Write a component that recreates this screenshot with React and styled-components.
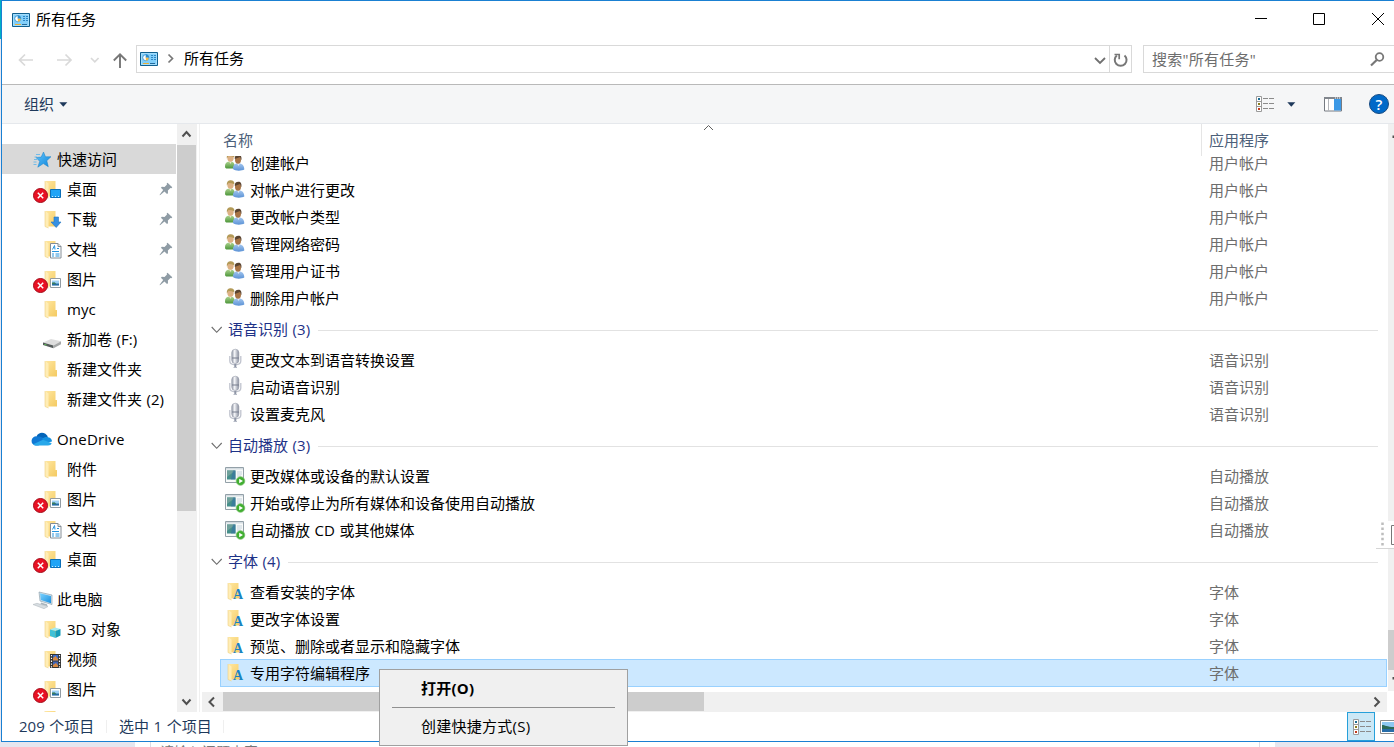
import React from "react";
import styled, { createGlobalStyle, css } from "styled-components";

const quickAccess = [
  { name: "桌面", icon: "desktop", error: true, pinned: true },
  { name: "下载", icon: "download", pinned: true },
  { name: "文档", icon: "document", pinned: true },
  { name: "图片", icon: "picture", error: true, pinned: true },
  { name: "myc", icon: "folder" },
  { name: "新加卷 (F:)", icon: "drive" },
  { name: "新建文件夹", icon: "folder" },
  { name: "新建文件夹 (2)", icon: "folder" },
];

const oneDrive = [
  { name: "附件", icon: "folder" },
  { name: "图片", icon: "picture", error: true },
  { name: "文档", icon: "document" },
  { name: "桌面", icon: "desktop", error: true },
];

const thisPc = [
  { name: "3D 对象", icon: "cube" },
  { name: "视频", icon: "video" },
  { name: "图片", icon: "picture", error: true },
  // only the top of this row's icon shows above the status bar
  { name: "", icon: "folder" },
];

const groups = [
  {
    app: "用户帐户",
    icon: "users",
    hideTitle: true,
    tasks: [
      "创建帐户",
      "对帐户进行更改",
      "更改帐户类型",
      "管理网络密码",
      "管理用户证书",
      "删除用户帐户",
    ],
  },
  {
    app: "语音识别",
    icon: "mic",
    tasks: ["更改文本到语音转换设置", "启动语音识别", "设置麦克风"],
  },
  {
    app: "自动播放",
    icon: "autoplay",
    tasks: [
      "更改媒体或设备的默认设置",
      "开始或停止为所有媒体和设备使用自动播放",
      "自动播放 CD 或其他媒体",
    ],
  },
  {
    app: "字体",
    icon: "font",
    tasks: [
      "查看安装的字体",
      "更改字体设置",
      "预览、删除或者显示和隐藏字体",
      "专用字符编辑程序",
    ],
  },
];

export default function App() {
  return (
    <>
      <GlobalStyle />
      <Gradients />
      <Screen>
        <WindowRow>
          <DesktopEdge />
          <Window>
            <TitleBar />
            <NavigationBar />
            <CommandBar />
            <Body>
              <Sidebar />
              <Content />
            </Body>
            <Status />
          </Window>
        </WindowRow>
        <PageBehind>
          <BehindLeft />
          <BehindEditor>
            <span>请输入问题内容</span>
          </BehindEditor>
          <BehindGap />
          <BehindRight />
        </PageBehind>
        <DockedToolbar />
        <ContextMenu>
          <MenuItem $bold>打开(O)</MenuItem>
          <MenuSeparator />
          <MenuItem>创建快捷方式(S)</MenuItem>
        </ContextMenu>
      </Screen>
    </>
  );
}

function TitleBar() {
  return (
    <Title>
      <PanelIcon />
      <TitleText>所有任务</TitleText>
      <WindowButtons width="139" height="38" viewBox="0 0 139 38">
        <path d="M0 18.500h12" />
        <path d="M58.500 13.500h11v11h-11z" />
        <path d="M117 13l12 12M129 13l-12 12" />
      </WindowButtons>
    </Title>
  );
}

function NavigationBar() {
  return (
    <Nav>
      <svg width="134" height="45" viewBox="2 39 134 45" fill="none">
        <g stroke="#d9d9d9" strokeWidth="1.7">
          <path d="M33 60H19M25 54.500L19.500 60l5.500 5.500" />
          <path d="M57 60h14M65.500 54.500L71 60l-5.500 5.500" />
          <path d="M91 58l3.800 3.800L98.600 58" />
        </g>
        <path
          d="M120 68V54.500M113.800 60.500l6.200-6.200 6.200 6.200"
          stroke="#777"
          strokeWidth="1.900"
        />
      </svg>
      <AddressBox>
        <PanelIcon />
        <svg width="26" height="26" viewBox="0 0 26 26" fill="none">
          <path d="M10.500 8.500l4 4-4 4" stroke="#777" strokeWidth="1.700" />
        </svg>
        <AddressText>所有任务</AddressText>
        <svg width="18" height="26" viewBox="0 0 18 26" fill="none">
          <path d="M4 12l5 5 5-5" stroke="#707070" strokeWidth="1.800" />
        </svg>
        <RefreshCell>
          <svg width="21" height="26" viewBox="0 0 21 26" fill="none">
            <path
              d="M14.500 9.400A5.900 5.900 0 1 1 6.800 9.400"
              stroke="#777"
              strokeWidth="2"
            />
            <path d="M4.500 8.500h4.700v4.700" stroke="#777" strokeWidth="1.700" />
          </svg>
        </RefreshCell>
      </AddressBox>
      <SearchBox>
        搜索"所有任务"
        <svg width="25" height="26" viewBox="0 0 25 26" fill="none">
          <circle cx="10.500" cy="11" r="3.800" stroke="#777" strokeWidth="1.800" />
          <path d="M7.700 14L2 19.500" stroke="#777" strokeWidth="2.200" />
        </svg>
      </SearchBox>
    </Nav>
  );
}

function CommandBar() {
  return (
    <Commands>
      <OrganizeButton>
        组织
        <Caret />
      </OrganizeButton>
      <CommandIcons>
        <DetailsIcon />
        <Caret />
        <svg width="18" height="15" viewBox="0 0 18 15">
          <path d="M.5.500h17v13.500H.5z" fill="#fff" stroke="#767b82" />
          <path d="M0 0h18v2H0z" fill="#81868d" />
          <path d="M11 1h1M13 1h1M15 1h1" stroke="#fff" />
          <path d="M4.500 2v12" stroke="#b3b6ba" />
          <path d="M10 2h7v11.500h-7z" fill="#3c99e6" />
        </svg>
        <svg width="20" height="20" viewBox="0 0 20 20">
          <circle cx="10" cy="10" r="9.500" fill="#0069c8" stroke="#174b82" />
          <HelpMark x="10" y="15.500">
            ?
          </HelpMark>
        </svg>
      </CommandIcons>
    </Commands>
  );
}

function Sidebar() {
  return (
    <SidebarArea>
      <Tree>
        <TreeSection title="快速访问" icon="star" items={quickAccess} active />
        <TreeSection title="OneDrive" icon="cloud" items={oneDrive} />
        <TreeSection title="此电脑" icon="computer" items={thisPc} />
      </Tree>
      <VerticalScroll>
        <ArrowButton direction="up" />
        <VerticalThumb />
        <Spacer />
        <ArrowButton direction="down" />
      </VerticalScroll>
    </SidebarArea>
  );
}

function TreeSection({ title, icon, items, active }) {
  return (
    <Section>
      <RootRow $active={active}>
        <RootIcon name={icon} />
        {title}
      </RootRow>
      {items.map((item) => (
        <TreeRow key={item.name}>
          <PlaceIcon name={item.icon} error={item.error} />
          <TreeLabel>{item.name}</TreeLabel>
          {item.pinned && <Pin />}
        </TreeRow>
      ))}
    </Section>
  );
}

function Content() {
  return (
    <>
      <Main>
        <ColumnHeader>
          <NameHeader>名称</NameHeader>
          <SortMark width="12" height="7" viewBox="0 0 12 7">
            <path d="M2 6l4.500-4.500L11 6" />
          </SortMark>
          <AppHeader>应用程序</AppHeader>
        </ColumnHeader>
        <ListViewport>
          <List>
            {groups.map((group) => (
              <React.Fragment key={group.app}>
                {!group.hideTitle && (
                  <GroupTitle>
                    <svg width="12" height="8" viewBox="0 0 12 8" fill="none">
                      <path d="M.7 1l5 5.300 5-5.300" stroke="#6d6d6d" strokeWidth="1.100" />
                    </svg>
                    <GroupLabel>
                      {group.app} ({group.tasks.length})
                    </GroupLabel>
                    <GroupLine />
                  </GroupTitle>
                )}
                {group.tasks.map((task) => (
                  <TaskRow key={task} $selected={task === "专用字符编辑程序"}>
                    <TaskIcon name={group.icon} />
                    <TaskName>{task}</TaskName>
                    <TaskApp>{group.app}</TaskApp>
                  </TaskRow>
                ))}
              </React.Fragment>
            ))}
          </List>
        </ListViewport>
        <HorizontalScroll>
          <ArrowButton direction="left" />
          <HorizontalThumb />
          <Spacer />
          <ArrowButton direction="right" />
        </HorizontalScroll>
      </Main>
      <OuterScroll>
        <svg width="6" height="20" viewBox="0 0 6 20">
          <path d="M6 11.500H4.500V14H6z" fill="#505050" />
        </svg>
        <Spacer />
        <OuterThumb />
        <svg width="6" height="21" viewBox="0 0 6 21">
          <path d="M6 7H4.500v2.500H6z" fill="#505050" />
        </svg>
      </OuterScroll>
    </>
  );
}

function Status() {
  return (
    <StatusBar>
      <StatusText $width={105}>209 个项目</StatusText>
      <StatusText $width={117}>选中 1 个项目</StatusText>
      <Spacer />
      <ViewButton>
        <DetailsIcon />
      </ViewButton>
      <svg width="19" height="28" viewBox="0 0 19 28">
        <path d="M5.500 7.500h18v13h-18z" fill="#fff" stroke="#8b8b8b" />
        <path d="M7 9h14v10H7z" fill="#8ec8f2" />
        <path d="M7 12c3 0 5 2 12 2v2H7z" fill="#2b6a58" />
        <path d="M7 16h14v3H7z" fill="#276ca8" />
      </svg>
    </StatusBar>
  );
}

function DockedToolbar() {
  return (
    <Docked width="18" height="28" viewBox="0 0 18 28">
      <path d="M0 0h18v28H0z" fill="#fff" />
      <path d="M6.500 1.500v26" stroke="#bdbdbd" strokeWidth="2.500" strokeDasharray="2.500 2.600" />
      <path d="M0 27.500h18" stroke="#d5d5d5" />
      <path d="M20 4.500h-4.500v19H20" fill="none" stroke="#777" />
    </Docked>
  );
}

/* ---------- icons ---------- */

function Gradients() {
  return (
    <HiddenSvg width="0" height="0">
      <defs>
        <linearGradient id="folder" x1="0" x2="1" y2="1">
          <stop offset="0" stopColor="#ffe7a0" />
          <stop offset="1" stopColor="#f4ca61" />
        </linearGradient>
        <linearGradient id="star" x1="0" x2="1" y2="1">
          <stop offset="0" stopColor="#63c3fa" />
          <stop offset="1" stopColor="#0e86dc" />
        </linearGradient>
        <linearGradient id="screen" x1="0" x2="1" y2="1">
          <stop offset="0" stopColor="#7cd3ff" />
          <stop offset="1" stopColor="#1b8fde" />
        </linearGradient>
        <linearGradient id="mic" x1="0" x2="1">
          <stop offset="0" stopColor="#8f95a4" />
          <stop offset=".4" stopColor="#f4f5f8" />
          <stop offset="1" stopColor="#858b9b" />
        </linearGradient>
        <linearGradient id="green" x2="0" y2="1">
          <stop offset="0" stopColor="#b3d795" />
          <stop offset="1" stopColor="#4c963a" />
        </linearGradient>
        <linearGradient id="blue" x2="0" y2="1">
          <stop offset="0" stopColor="#a5c7ef" />
          <stop offset="1" stopColor="#5c93d6" />
        </linearGradient>
      </defs>
    </HiddenSvg>
  );
}

function PanelIcon() {
  return (
    <svg width="18" height="14" viewBox="0 0 18 14">
      <path d="M.5.500h17v13H.5z" fill="#82cffa" stroke="#11608f" />
      <path d="M1.500 1.500h15v11h-15z" fill="none" stroke="#a5ddfb" />
      <circle cx="5.700" cy="5.700" r="3" fill="#fff" stroke="#2c8ccb" strokeWidth=".8" />
      <path d="M5.700 5.700V2.300A3.400 3.400 0 0 1 9 5.700z" fill="#2c8ccb" />
      <path d="M5.700 5.700h3A3 3 0 0 1 6 8.700z" fill="#f5b942" />
      <path d="M11 3.500h2M11 5.500h2M11 7.500h2M14 3.500h2M14 5.500h2M14 7.500h2" stroke="#2f86c4" />
      <path d="M3 11.500h6" stroke="#e9ae36" />
      <path d="M10 11.500h5" stroke="#236c9d" />
    </svg>
  );
}

function Caret() {
  return (
    <svg width="9" height="5" viewBox="0 0 9 5">
      <path d="M.3.200h8L4.300 4.700z" fill="#1e395b" />
    </svg>
  );
}

function DetailsIcon() {
  return (
    <svg width="18" height="16" viewBox="0 0 18 16" fill="none">
      <path d="M.5.500h5v15h-5zM.5 5.500h5M.5 10.500h5" fill="#fff" stroke="#9a9a9a" />
      <path d="M2 3h2" stroke="#1b6d94" strokeWidth="2" />
      <path d="M2 8h2" stroke="#8a7d1b" strokeWidth="2" />
      <path d="M2 13h2" stroke="#c3391b" strokeWidth="2" />
      <path
        d="M7 2.500h5M13 2.500h5M7 7.500h5M13 7.500h5M7 12.500h5M13 12.500h5"
        stroke="#8b8b8b"
      />
    </svg>
  );
}

function Pin() {
  return (
    <svg width="14" height="14" viewBox="0 0 14 14" fill="#8f9ca5">
      <path d="M8.500.7l4.800 4.600-.9.900-1-.2-2.500 2.600.1 2.600-1 .9-2.500-2.500L1.300 13l-.7.200.2-.8 3.400-4.300L1.900 5.700l1-1 2.600.2L8 2.500l-.3-1z" />
    </svg>
  );
}

function RootIcon({ name }) {
  return (
    <svg width="22" height="30" viewBox="31 0 22 30">
      {name === "star" && (
        <>
          <path
            d="M43.500 8l2 4.800 5.500-.1-4.200 4 1.500 6-5-3.100-5.500 3.600 1.900-5.900-3.700-3.800 5.200-.4z"
            fill="url(#star)"
            stroke="#1580c8"
            strokeWidth=".5"
          />
          <path
            d="M36 10.500h4M34.500 13h2.500M34 15.500h3M33.500 18h3M33.500 20.500h3"
            stroke="#58b5ee"
            strokeWidth=".8"
          />
        </>
      )}
      {name === "cloud" && (
        <>
          <path d="M36.500 12.500c2-4.800 9-5.200 11.500.7l-3 5z" fill="#0364b8" />
          <path d="M36.800 21.500a4.600 4.600 0 1 1 .5-9c2-.4 4 .2 6 1.500l4 4-9 3.500z" fill="#0f78d4" />
          <path d="M42 15c1.800-1.800 4-2.300 6-1.800 2.700.5 4 2.300 4 4.300L46 19z" fill="#1490df" />
          <path d="M33.200 20.200L43 15.700l8.700 3.600c-.6 1.700-1.900 2.200-3.700 2.200H36.500c-1.400 0-2.600-.5-3.300-1.300z" fill="#28a8ea" />
        </>
      )}
      {name === "computer" && (
        <>
          <path d="M39 8l13 3v9.500L40 17z" fill="#d5e3ec" stroke="#8297a5" strokeWidth=".6" />
          <path d="M40 9.200l11 2.700v7.400L40.800 16z" fill="url(#screen)" />
          <path d="M41 18.500l6 1.700.5 2-7-2z" fill="#a9b5bd" />
          <path d="M33 20.500l4-1.200 11 3.200-4 2.200z" fill="#d7dde1" stroke="#aab3b9" strokeWidth=".5" />
        </>
      )}
    </svg>
  );
}

function FolderShape() {
  return (
    <>
      <path d="M12 7h10.500v9h1.500v6.500h-9V10z" fill="url(#folder)" />
      <path d="M12 7l3.500 2.500V24L12 22.500z" fill="#ffedb5" />
      <path d="M12 7v15.500l3.500 1.500" fill="none" stroke="#efce7c" strokeWidth=".6" />
    </>
  );
}

function PlaceIcon({ name, error }) {
  return (
    <svg width="34" height="30" viewBox="0 0 34 30">
      {name !== "drive" && <FolderShape />}
      {name === "desktop" && (
        <>
          <path d="M17.500 15.500h10v8h-10z" fill="#1fa4f7" stroke="#0d70b8" />
          <path d="M19 22.500h1M22 22.500h1M25 22.500h1" stroke="#cbeaff" />
        </>
      )}
      {name === "download" && (
        <path d="M21 13h4.500v5H28l-4.800 5.500L18 18h3z" fill="#3690e3" stroke="#2476bf" strokeWidth=".6" />
      )}
      {name === "document" && (
        <>
          <path d="M17.500 9.500H25l3 3v11.500H17.500z" fill="#fff" stroke="#858e96" />
          <path d="M25 9.500v3h3" fill="#e3e6e8" stroke="#858e96" />
          <path d="M19.500 15.500l2-4 .5 4M24 14.500h2M19 17.500h7M19 20h2M22.500 20h4M19 22h2M22.500 22h4" fill="none" stroke="#2693dc" />
        </>
      )}
      {name === "picture" && (
        <>
          <path d="M17.500 14.500h10v9h-10z" fill="#fff" stroke="#929ba3" />
          <path d="M19 16.500h7v5h-7z" fill="#9ed0f4" />
          <path d="M19 19.500l2-1 2 1h3v2h-7z" fill="#276da0" />
          <path d="M19 18.500h3l1 1.500h-4z" fill="#397d5d" />
        </>
      )}
      {name === "drive" && (
        <>
          <path d="M10 18.500L18 15l10 2.200-7.500 4.300z" fill="#dedede" />
          <path d="M10 18.500l10.500 3v2.800L10 21z" fill="#555b5b" />
          <path d="M20.500 21.500l7.500-4.300v3L20.500 24.300z" fill="#a6a8a8" />
          <path d="M11.500 20.500l2 .5" stroke="#62cf58" />
        </>
      )}
      {name === "cube" && (
        <>
          <path d="M17 15.500l5-2 5.500 1.500-5 2z" fill="#a6eaf2" />
          <path d="M17 15.500l5.500 1.500v7L17 22z" fill="#3fc1d7" />
          <path d="M22.500 17l5-2v6.500l-5 2.500z" fill="#149bb9" />
        </>
      )}
      {name === "video" && (
        <>
          <path d="M17 10h11v14H17z" fill="#343434" />
          <path d="M20 11h5v5.500h-5z" fill="#396bcb" />
          <path d="M20 17.500h5V23h-5z" fill="#4165b6" />
          <path d="M20 14l2.500-2 2.500 3v1.500h-5zM20 21l3-2 2 2.500V23h-5z" fill="#d78942" />
          <path d="M18.500 11v13M26.500 11v13" stroke="#fff" strokeWidth="1.200" strokeDasharray="1.300 1.500" />
        </>
      )}
      {error && (
        <>
          <circle cx="7.500" cy="21.500" r="7" fill="#e81123" stroke="#a40d1b" />
          <path d="M4.800 18.800l5.400 5.400M10.200 18.800l-5.400 5.400" stroke="#fff" strokeWidth="1.500" />
        </>
      )}
    </svg>
  );
}

function TaskIcon({ name }) {
  return (
    <svg width="24" height="27" viewBox="0 0 24 27">
      {name === "users" && (
        <g transform="translate(0 1)">
          <path d="M2 15.500c0-4 2.300-5 5-5.300 3.500.3 5 1.800 5 7.300H4c-1.200 0-2-.5-2-2z" fill="url(#green)" />
          <path d="M5.500 9.500h3.500l-1.500 3.500z" fill="#e8e8cc" />
          <ellipse cx="7.500" cy="6.700" rx="3.200" ry="4" fill="#ddb184" />
          <path d="M3.800 7.500C3.500 4 5 2.200 7.700 2.200c2.500 0 3.800 1.300 3.700 4L8.500 5.200 5.500 5z" fill="#b39a57" />
          <path d="M10 18c-.2-4 2-5.700 5.500-5.700S21.300 14.500 21.300 18.500c-2.300 1.500-9.300 1.700-11.300-.5z" fill="url(#blue)" />
          <path d="M13.500 11.500h4l-2 3.500z" fill="#e1ebf5" />
          <ellipse cx="15" cy="8.700" rx="3" ry="4.100" fill="#a87445" />
          <path d="M11.800 8c-.3-3 1.200-4.200 3.700-4.200 2.300 0 3.500 2 2.800 5.400L17 6z" fill="#594330" />
        </g>
      )}
      {name === "mic" && (
        <>
          <path d="M6.800 9v5c0 5 11 5 11 0V9" fill="none" stroke="#c0c4ce" strokeWidth="1.300" />
          <rect x="8.700" y="2.200" width="7.200" height="14.300" rx="3.600" fill="url(#mic)" stroke="#9a9fac" strokeWidth=".6" />
          <path d="M9 11h7" stroke="#767d8d" />
          <path d="M12.300 16.800V21" stroke="#8f96a6" strokeWidth="2" />
          <path d="M10.500 20.500H14" stroke="#b5bac6" />
        </>
      )}
      {name === "autoplay" && (
        <>
          <path d="M2.500 4.500h18v15h-18z" fill="#f8faf9" stroke="#93a0a8" />
          <path d="M3 5h17v1.500H3z" fill="#d4dce1" />
          <path d="M4 7.500h8.500v9H4z" fill="#458f8a" />
          <path d="M4 7.500h8.500L4 14z" fill="#6fa09a" />
          <path d="M10 7.500h2.500v9H8z" fill="#3472a5" opacity=".6" />
          <path d="M14 9h5M14 11h5M14 13h4" stroke="#c6d3dc" />
          <circle cx="17.500" cy="18" r="4.300" fill="#41ae31" stroke="#78be6c" strokeWidth=".7" />
          <path d="M16.200 15.700v4.600l3.800-2.300z" fill="#fff" />
        </>
      )}
      {name === "font" && (
        <>
          <g transform="translate(-7 -3)">
            <FolderShape />
          </g>
          <FontLetter x="15" y="20">
            A
          </FontLetter>
        </>
      )}
    </svg>
  );
}

const arrowPaths = {
  up: "M5.500 12.500l4-4.500 4 4.500",
  down: "M5.500 7.500l4 4.500 4-4.500",
  left: "M12 5.500L7.500 10l4.500 4.500",
  right: "M7.500 5.500l4.500 4.500-4.500 4.500",
};

function ArrowButton({ direction }) {
  return (
    <ArrowSvg width="20" height="20" viewBox="0 0 20 20">
      <path d={arrowPaths[direction]} />
    </ArrowSvg>
  );
}

/* ---------- styles ---------- */

const GlobalStyle = createGlobalStyle`
  * {
    box-sizing: border-box;
  }

  body {
    margin: 0;
    overflow: hidden;
    background: #fff;
    color: #000;
    font-family: "Open Sans", "Noto Sans CJK SC", sans-serif;
    font-size: 15px;
    line-height: 20px;
    white-space: nowrap;
    word-spacing: 0.7px;
  }

  svg {
    display: block;
    flex: none;
  }
`;

const HiddenSvg = styled.svg`
  position: absolute;
`;

const Screen = styled.div`
  position: relative;
  display: flex;
  flex-direction: column;
  width: 1394px;
  height: 747px;
  overflow: hidden;
`;

const WindowRow = styled.div`
  display: flex;
  height: 742px;
`;

const DesktopEdge = styled.div`
  width: 1px;
  background: linear-gradient(#00b1c4 39px, #e8e8f1 39px);
`;

const Window = styled.div`
  display: flex;
  flex-direction: column;
  width: 1393px;
  border: 1px solid #1a80d2;
  border-right: 0;
  background: #fff;
`;

const Title = styled.header`
  display: flex;
  align-items: center;
  height: 38px;
  padding-left: 10px;
`;

const TitleText = styled.span`
  flex: 1;
  margin-left: 6px;
  padding-bottom: 2px;
`;

const WindowButtons = styled.svg`
  margin-top: -2px;
  fill: none;
  stroke: #000;
  stroke-width: 1;
`;

const Nav = styled.nav`
  display: flex;
  height: 45px;
`;

const AddressBox = styled.div`
  display: flex;
  align-items: center;
  width: 996px;
  height: 28px;
  margin-top: 6px;
  padding-left: 3px;
  border: 1px solid #d9d9d9;
`;

const AddressText = styled.span`
  flex: 1;
  padding-bottom: 2px;
`;

const RefreshCell = styled.div`
  border-left: 1px solid #d9d9d9;
`;

const SearchBox = styled.div`
  display: flex;
  align-items: center;
  justify-content: space-between;
  width: 251px;
  height: 28px;
  margin: 6px 0 0 11px;
  padding-left: 8px;
  border: 1px solid #d9d9d9;
  border-right: 0;
  color: #6d6d6d;
  letter-spacing: 0.25px;
`;

const Commands = styled.div`
  display: flex;
  align-items: center;
  justify-content: space-between;
  height: 40px;
  padding-left: 22px;
  border-top: 1px solid #b9b9b9;
  border-bottom: 1px solid #e5e8ec;
  background: #f5f6f7;
  color: #1e395b;
`;

const OrganizeButton = styled.div`
  display: flex;
  align-items: center;
  gap: 5px;
`;

const CommandIcons = styled.div`
  display: grid;
  grid-template-columns: 31px 37px 45px 25px;
  align-items: center;
`;

const HelpMark = styled.text`
  fill: #fff;
  font: 600 15px "Open Sans", sans-serif;
  text-anchor: middle;
`;

const FontLetter = styled.text`
  fill: #1984bf;
  font: bold 14px "Liberation Serif", serif;
  text-anchor: middle;
`;

const Body = styled.div`
  display: flex;
  height: 588px;
`;

const SidebarArea = styled.aside`
  display: flex;
  width: 198px;
  border-right: 1px solid #f0f0f0;
`;

const Tree = styled.div`
  display: flex;
  flex-direction: column;
  gap: 10px;
  width: 174px;
  padding-top: 20px;
  margin-right: 1px;
  overflow: hidden;
`;

const Section = styled.div`
  flex: none;
`;

const RootRow = styled.div`
  display: flex;
  align-items: center;
  gap: 4px;
  height: 30px;
  padding-left: 29px;
  background: ${({ $active }) => ($active ? "#d9d9d9" : "transparent")};
  letter-spacing: ${({ $active }) => ($active ? 0 : "0.2px")};
`;

const TreeRow = styled.div`
  display: flex;
  align-items: center;
  height: 30px;
  padding: 0 3px 0 31px;
`;

const TreeLabel = styled.span`
  flex: 1;
`;

const VerticalScroll = styled.div`
  display: flex;
  flex-direction: column;
  width: 20px;
  background: #f0f0f0;
`;

const VerticalThumb = styled.div`
  width: 19px;
  height: 366px;
  margin-top: 1px;
  background: #cdcdcd;
`;

const Spacer = styled.div`
  flex: 1;
`;

const ArrowSvg = styled.svg`
  fill: none;
  stroke: #505050;
  stroke-width: 2;
`;

const Main = styled.main`
  display: flex;
  flex-direction: column;
  width: 1187px;
`;

const ColumnHeader = styled.div`
  display: grid;
  grid-template-columns: 502px 499px 1fr;
  height: 32px;
  color: #4c607a;
  line-height: 32px;
`;

const NameHeader = styled.div`
  padding-left: 23px;
`;

const SortMark = styled.svg`
  fill: none;
  stroke: #606060;
`;

const AppHeader = styled.div`
  padding-left: 7px;
  border-left: 1px solid #e5e5e5;
`;

const ListViewport = styled.div`
  height: 536px;
  overflow: hidden;
`;

const List = styled.div`
  margin-top: -6px;
  padding-left: 20px;
`;

const GroupTitle = styled.div`
  display: flex;
  align-items: center;
  gap: 5px;
  height: 35px;
  margin-left: -9px;
  padding-right: 9px;
  color: #1e3287;
`;

const GroupLabel = styled.span`
  padding-bottom: 2px;
`;

const GroupLine = styled.div`
  flex: 1;
  height: 1px;
  margin: 1px 0 0 3px;
  background: #e2e2e2;
`;

const TaskRow = styled.div`
  display: flex;
  align-items: center;
  height: 27px;
  padding-left: 3px;
  line-height: 27px;

  ${({ $selected }) =>
    $selected &&
    css`
      height: 28px;
      margin-top: -1px;
      padding-left: 2px;
      border: 1px solid #99d1ff;
      background: #cce8ff;
      line-height: 26px;
    `}
`;

const TaskName = styled.span`
  flex: 1;
  height: 27px;
  margin-left: 3px;
`;

const TaskApp = styled.span`
  width: 178px;
  height: 27px;
  color: #6d6d6d;

  ${TaskRow}:last-child & {
    width: 177px;
  }
`;

const HorizontalScroll = styled.div`
  display: flex;
  height: 20px;
  margin-left: 2px;
  background: #f0f0f0;
`;

const HorizontalThumb = styled.div`
  width: 481px;
  height: 19px;
  margin-left: 1px;
  background: #cdcdcd;
`;

const OuterScroll = styled.div`
  display: flex;
  flex: 1;
  flex-direction: column;
  height: 567px;
  margin-left: 1px;
  background: #f0f0f0;
`;

const OuterThumb = styled.div`
  height: 40px;
  background: #cdcdcd;
`;

const StatusBar = styled.footer`
  display: flex;
  align-items: center;
  height: 29px;
  color: #1e395b;
`;

const StatusText = styled.div`
  width: ${({ $width }) => $width}px;
  height: 13px;
  padding-left: 17px;
  border-right: 1px solid #efefef;
  line-height: 13px;

  & + & {
    padding-left: 12px;
  }
`;

const ViewButton = styled.div`
  display: flex;
  align-items: center;
  justify-content: center;
  width: 28px;
  height: 29px;
  padding-left: 2px;
  border: 1px solid #26a0da;
  background: #cbe8f6;
`;

const PageBehind = styled.div`
  display: flex;
  height: 5px;
  overflow: hidden;
`;

const BehindLeft = styled.div`
  width: 135px;
  background: #e6e6ef;
`;

const BehindEditor = styled.div`
  width: 1110px;
  margin-left: 15px;
  padding: 0 0 0 9px;
  border: solid #dcdce4;
  border-width: 0 1px;
  color: #777;
  font-size: 14px;
`;

const BehindGap = styled.div`
  width: 15px;
`;

const BehindRight = styled.div`
  flex: 1;
  background: #e6e6ef;
`;

const Docked = styled.svg`
  position: absolute;
  top: 521px;
  left: 1376px;
`;

const ContextMenu = styled.div`
  position: absolute;
  top: 669px;
  left: 379px;
  width: 249px;
  height: 77px;
  padding: 4px 12px;
  border: 1px solid #a0a0a0;
  background: #f0f0f0;
`;

const MenuItem = styled.div`
  height: 30px;
  padding-left: 29px;
  font-weight: ${({ $bold }) => ($bold ? 700 : 400)};
  letter-spacing: 0.25px;
  line-height: 28px;
`;

const MenuSeparator = styled.div`
  height: 1px;
  margin: 3px 0 4px;
  background: #909090;
`;
